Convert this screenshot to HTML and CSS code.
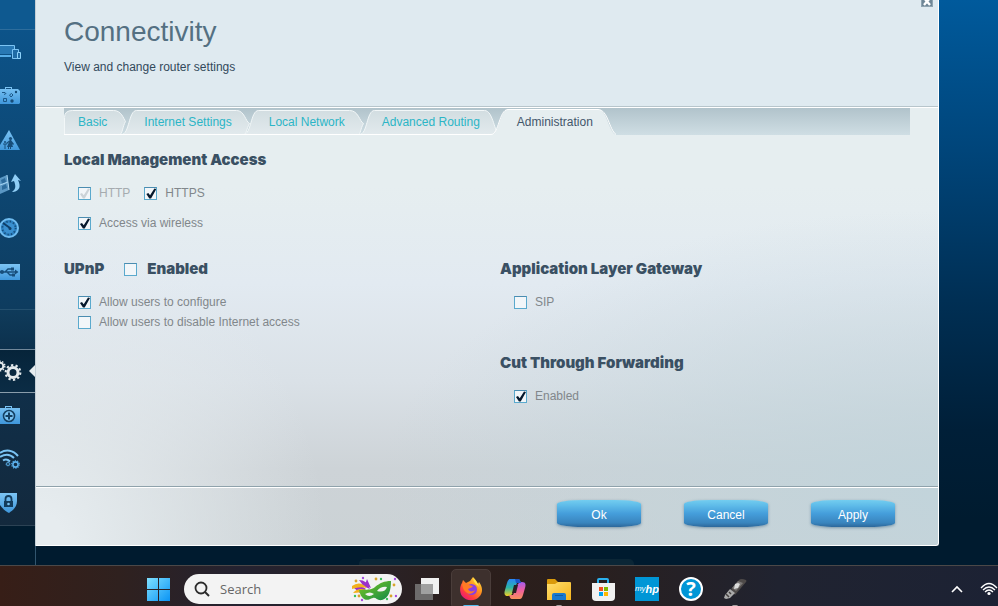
FILE: index.html
```html
<!DOCTYPE html>
<html lang="en">
<head>
<meta charset="utf-8">
<title>Connectivity</title>
<link rel="stylesheet" href="styles.css">
</head>
<body>
<svg width="0" height="0" class="defs" aria-hidden="true">
  <defs>
    <linearGradient id="ice" x1="0" y1="0" x2="0" y2="1"><stop offset="0" stop-color="#7cc4f4"/><stop offset="1" stop-color="#3f97db"/></linearGradient>
    <linearGradient id="tabfill" x1="0" y1="0" x2="0" y2="1"><stop offset="0" stop-color="#d2dde1"/><stop offset="1" stop-color="#e2eaed"/></linearGradient>
    <linearGradient id="win" x1="0" y1="0" x2="1" y2="1"><stop offset="0" stop-color="#7fe0ff"/><stop offset="1" stop-color="#0a94f5"/></linearGradient>
    <linearGradient id="fox" x1="1" y1="0" x2=".2" y2="1"><stop offset="0" stop-color="#fff44f"/><stop offset=".4" stop-color="#ff9a1f"/><stop offset=".75" stop-color="#ff3f3c"/><stop offset="1" stop-color="#e5147f"/></linearGradient>
    <linearGradient id="cop1" x1="0" y1="0" x2="0" y2="1"><stop offset="0" stop-color="#2a86f5"/><stop offset=".5" stop-color="#2bb5a8"/><stop offset="1" stop-color="#f0cf22"/></linearGradient>
    <linearGradient id="cop2" x1="0" y1="0" x2="0" y2="1"><stop offset="0" stop-color="#a45cf0"/><stop offset=".5" stop-color="#ef5f9d"/><stop offset="1" stop-color="#f9905a"/></linearGradient>
    <linearGradient id="fold" x1="0" y1="0" x2="1" y2="1"><stop offset="0" stop-color="#ffdf70"/><stop offset="1" stop-color="#f6b51a"/></linearGradient>
    <linearGradient id="leaf" x1="0" y1="0" x2="1" y2="1"><stop offset="0" stop-color="#7fc91f"/><stop offset="1" stop-color="#12894a"/></linearGradient>
    <g id="gear">
      <circle r="5" fill="none" stroke="currentColor" stroke-width="3"/>
      <circle r="7.3" fill="none" stroke="currentColor" stroke-width="2.2" stroke-dasharray="2.3 2.29"/>
    </g>
  </defs>
</svg>
<div class="page">
  <nav class="side" aria-label="Router menu">
    <div class="group first">
      <a href="#" aria-label="Device list"><svg width="22" height="20" viewBox="0 0 22 20"><path d="M0 3.500h14.500v4" fill="none" stroke="#7cc4f4"/><path d="M0 4h14v8H0z" fill="#2878b4"/><path d="M0 13h11v2H0z" fill="#58aee9"/><path d="M12.500 7.500h6v9h-6z" fill="#1f6ba5" stroke="#7cc4f4"/><path d="M17.500 10.500h3v6h-3z" fill="#1f6ba5" stroke="#8ed2fa"/></svg></a>
      <a href="#" aria-label="Guest access"><svg width="22" height="22" viewBox="0 0 22 22"><path d="M5 4V2h7v2h6l2 2v12l-1 1H0V4z" fill="url(#ice)"/><path d="M6 4V3h5v1z" fill="#145080"/><g fill="none" stroke="#1b5686"><path d="M2 7.500h3l1 1-2 1M3.500 13.500h3v3h-3zM9.500 10l2-1.500L13 10l-2 2z"/></g><circle cx="12" cy="16" r="1.700" fill="#164c78"/><circle cx="16" cy="7" r="1.200" fill="#164c78"/></svg></a>
      <a href="#" aria-label="Parental controls"><svg width="22" height="22" viewBox="0 0 22 22"><path d="M9 1l11 20H0V16z" fill="url(#ice)"/><g fill="#174e7b"><circle cx="10.500" cy="9.500" r="1.600"/><path d="M10 11h1l3 4-1 1-1-1 1 3h-2v2h-1v-2h-1v2H8v-2H7l2-5-2 2-1-1z"/><circle cx="5" cy="13" r="1"/><path d="M3 14.500h4v1H5.500V20h-1v-4.500H3z"/></g></svg></a>
      <a href="#" aria-label="Media prioritization"><svg width="22" height="22" viewBox="0 0 22 22"><path d="M0 5l7-3 2 15-9 4z" fill="#5a97c4"/><path d="M1 7l4-2 1 4-4 2zM2 13l4-2 1 4-5 2z" fill="#2d6c9d"/><path d="M7 2l2 15M0 12l8-3" stroke="#a7d5f3" fill="none"/><path d="M13 19c7-1 8-6 5-12l3 1-6-7-4 8 3-1c2 5 2 8-2 11z" fill="#90cef6"/></svg></a>
      <a href="#" aria-label="Speed test"><svg width="22" height="22" viewBox="0 0 22 22"><circle cx="9" cy="11" r="9" fill="#2b7fbf" stroke="#6fbcf0" stroke-width="2"/><circle cx="9" cy="11" r="6.500" fill="none" stroke="#154d7b" stroke-width="2" stroke-dasharray="1.200 2.200"/><circle cx="9" cy="11" r="5.500" fill="#3a90d0"/><path d="M3 6l7 5" stroke="#0f3f68" stroke-width="2"/><circle cx="10" cy="11.500" r="1.500" fill="#0f3f68"/></svg></a>
      <a href="#" aria-label="USB storage"><svg width="22" height="18" viewBox="0 0 22 18"><path d="M0 1h20v16H0z" fill="url(#ice)"/><path d="M0 9h17M5 9l3-3h4M7 9l3 3h3" fill="none" stroke="#174e7b" stroke-width="1.300"/><path d="M15 6.500L18.500 9 15 11.500zM11 4.500h3v3h-3zM12 10.500h3v3h-3z" fill="#174e7b"/><circle cx="2" cy="9" r="2" fill="#174e7b"/></svg></a>
    </div>
    <div class="spacer"></div>
    <a href="#" class="current" aria-label="Connectivity" aria-current="page"><svg width="24" height="26" viewBox="0 0 24 26" color="#e3e9ec"><use href="#gear" transform="translate(0 8) scale(.66)"/><use href="#gear" transform="translate(13 14.500)"/></svg></a>
    <div class="group last">
      <a href="#" aria-label="Troubleshooting"><svg width="22" height="22" viewBox="0 0 22 22"><path d="M5 4V2h7v2h8v16H0V4z" fill="url(#ice)"/><path d="M6 4V3h5v1z" fill="#123c5c"/><circle cx="9" cy="12" r="5.500" fill="#79c2f2" stroke="#143f61" stroke-width="1.600"/><path d="M8 8.500h2V11h2.500v2H10v2.500H8V13H5.500v-2H8z" fill="#143f61"/></svg></a>
      <a href="#" aria-label="Wireless"><svg width="22" height="22" viewBox="0 0 22 22" color="#5cb0ea"><g fill="none" stroke="#7cc4f4" stroke-width="2"><path d="M0 5c6-4 13-3 18 3M0 9c5-3 10-3 14 1M3 12.500c3-2 5-1 7 1"/></g><use href="#gear" transform="translate(15.500 16.500) scale(.52)"/><use href="#gear" transform="translate(8 16) scale(.3)"/></svg></a>
      <a href="#" aria-label="Security"><svg width="22" height="22" viewBox="0 0 22 22"><path d="M0 1h17v8c0 6-4 9-8 12-4-2-7-5-9-8z" fill="url(#ice)"/><path d="M5.500 10V7a3 3 0 0 1 6 0v3" fill="none" stroke="#133c5c" stroke-width="1.800"/><path d="M4 9h9v6H4z" fill="#133c5c"/><circle cx="8.500" cy="12" r="1.300" fill="#79c2f2"/></svg></a>
    </div>
  </nav>

  <main class="stage">
    <section class="dialog" aria-labelledby="title">
      <header>
        <h1 id="title">Connectivity</h1>
        <p>View and change router settings</p>
        <button class="close" type="button" aria-label="Close"><svg width="12" height="12" viewBox="0 0 12 12"><path d="M0 0h12v12H0z" fill="#8fa4b1"/><path d="M1 0h10v11H1z" fill="#6f8797"/><path d="M3 3l6 7M9 3l-6 7" stroke="#fff" stroke-width="2.400"/></svg></button>
      </header>
      <div class="content">
        <div class="tabs" role="tablist">
          <svg class="shapes" width="560" height="27" viewBox="0 0 560 27" aria-hidden="true">
            <g fill="url(#tabfill)" stroke="#f2f7f8">
              <path d="M295.500 26.500c8 0 7-24 15-24h110c9 0 10 24 15 24z"/>
              <path d="M179.500 26.500c8 0 7-24 15-24h91c9 0 10 11 14 13-3 5-3 11-5 11z"/>
              <path d="M57.500 26.500c8 0 7-24 15-24h100c8 0 9 11 13 13-3 5-3 11-6 11z"/>
              <path d="M.5 26.500v-17q0-7 8-7h41c8 0 10 8 12 11-3 5-3 13-6 13z"/>
            </g>
            <path d="M0 26.500h428c7 0 8-25 16-25h90c9 0 10 20 17 25v1H0z" fill="#e6eef0"/>
            <path d="M0 26.500h427c8 0 8-25 17-25h90c10 0 11 20 18 25" fill="none" stroke="#fff"/>
          </svg>
          <button type="button" role="tab">Basic</button>
          <button type="button" role="tab">Internet Settings</button>
          <button type="button" role="tab">Local Network</button>
          <button type="button" role="tab">Advanced Routing</button>
          <button type="button" role="tab" aria-selected="true">Administration</button>
        </div>
        <section class="block">
          <h2>Local Management Access</h2>
          <div class="row">
            <label><input type="checkbox" checked disabled>HTTP</label>
            <label><input type="checkbox" checked>HTTPS</label>
          </div>
          <div class="row spaced"><label><input type="checkbox" checked>Access via wireless</label></div>
        </section>
        <div class="columns">
          <section>
            <h2>UPnP <label class="big"><input type="checkbox">Enabled</label></h2>
            <div class="row"><label><input type="checkbox" checked>Allow users to configure</label></div>
            <div class="row"><label><input type="checkbox">Allow users to disable Internet access</label></div>
          </section>
          <div class="stack">
            <section>
              <h2>Application Layer Gateway</h2>
              <div class="row"><label><input type="checkbox">SIP</label></div>
            </section>
            <section>
              <h2>Cut Through Forwarding</h2>
              <div class="row"><label><input type="checkbox" checked>Enabled</label></div>
            </section>
          </div>
        </div>
      </div>
      <footer>
        <button type="button">Ok</button>
        <button type="button">Cancel</button>
        <button type="button">Apply</button>
      </footer>
    </section>
    <div class="strip"></div>
  </main>

  <div class="taskbar">
    <div class="apps">
      <button type="button" aria-label="Start"><svg width="24" height="24" viewBox="0 0 24 24"><path d="M1 1h11v11H1zM13 1h11v11H13zM1 13h11v11H1zM13 13h11v11H13z" fill="url(#win)"/></svg></button>
      <label class="search">
        <svg width="16" height="16" viewBox="0 0 16 16"><circle cx="7" cy="7" r="5.500" fill="none" stroke="#2b2b2b" stroke-width="1.800"/><path d="M11 11l4 4" stroke="#2b2b2b" stroke-width="2"/></svg>
        <input type="text" placeholder="Search" aria-label="Search">
        <svg width="46" height="26" viewBox="0 0 46 26"><g fill="#9b30c8"><path d="M8 4q8 0 11 9l-7-3q-2-4-4-6z"/><path d="M16 3l4 9-6-3zM3 12q8-3 12 1l-6 4z"/></g><path d="M1 10q8-6 15 2-7-2-15 1zM2 17q5-6 13-3-5 3-13 3z" fill="#f2b01e"/><path d="M8 14c8-1 11 1 16-3 5-4 9-6 16-6 0 9-2 17-9 19-5 1-6-3-9-2-4 1-5 3-9 1-3-2-4-5-5-9z" fill="url(#leaf)"/><path d="M14 18q5-3 9 0-5 4-9 0zM26 15q4-5 10-4-2 6-10 4z" fill="#f3f3f3"/><g fill="#a64ae0"><circle cx="12" cy="2" r="1.200"/><circle cx="44" cy="3" r="1.200"/><circle cx="45" cy="20" r="1.200"/><circle cx="11" cy="24" r="1.200"/></g><g fill="#d8a52a"><circle cx="5" cy="5" r="1.400"/><circle cx="43" cy="9" r="1.400"/><circle cx="40" cy="20" r="1.400"/><circle cx="25" cy="3" r="1.400"/><circle cx="8" cy="20" r="1.400"/></g><g fill="#36c15a"><circle cx="30" cy="3" r="1.200"/><circle cx="36" cy="23" r="1.200"/><circle cx="4" cy="20" r="1.200"/></g></svg>
      </label>
      <button type="button" aria-label="Task view"><svg width="24" height="24" viewBox="0 0 24 24"><path d="M6 1h18v16H6z" fill="#f0f0f0"/><path d="M0 7h18v16H0z" fill="#6d6b6b"/><path d="M6 7h12v10H6z" fill="#a0a0a0"/></svg></button>
      <button type="button" class="active" aria-label="Firefox"><svg width="24" height="24" viewBox="0 0 24 24"><path d="M3 6l1-3 3 3 4-2 3-4c3 3 4 5 5 7l1-2c4 5 4 11 0 15-5 5-13 4-17-1-3-5-2-10 0-13z" fill="url(#fox)"/><circle cx="12.500" cy="12.500" r="5.500" fill="#8a3fe0"/><path d="M3 7c2-2 5-1 7 1l4 1c-1 2-4 2-5 3 1 3 5 3 7 1-1 4-7 5-9 2-3-2-3-5-4-8z" fill="#ff7b25"/><path d="M14 1c4 3 5 6 6 9-2-3-5-3-6-9z" fill="#ffe64a"/></svg></button>
      <button type="button" aria-label="Copilot"><svg width="24" height="24" viewBox="0 0 24 24"><path d="M7 2h8c2 0 2 2 3 4h-4l-4 9c-1 3-3 4-5 4-4 0-4-3-3-6l2-7c1-3 2-4 3-4z" fill="url(#cop1)"/><path d="M17 22H9c-2 0-2-2-3-4h4l4-9c1-3 3-4 5-4 4 0 4 3 3 6l-2 7c-1 3-2 4-3 4z" fill="url(#cop2)"/><path d="M11 8h4l-2 8H9z" fill="#2b2024"/><path d="M12 2h3c2 0 2 2 3 4h-5z" fill="#1a56c9"/></svg></button>
      <button type="button" class="open" aria-label="File Explorer"><svg width="24" height="24" viewBox="0 0 24 24"><path d="M0 3q0-1 1-1h7l3 3h12v7H0z" fill="#d99a0b"/><path d="M0 7h8l3-2h12q1 0 1 1v17H0z" fill="url(#fold)"/><path d="M5 23v-5q0-2 2-2h10q2 0 2 2v5z" fill="#1779cf"/><path d="M8 18h8v1H8z" fill="#0d5ba6"/></svg></button>
      <button type="button" aria-label="Microsoft Store"><svg width="24" height="24" viewBox="0 0 24 24"><path d="M7 7V3q0-1 1-1h8q1 0 1 1v4" fill="none" stroke="#2bb1ee" stroke-width="2"/><path d="M1 6h23v14q0 4-4 4H5q-4 0-4-4z" fill="#f1f1f1"/><path d="M8 10h4v4H8z" fill="#f25022"/><path d="M13 10h4v4h-4z" fill="#7fba00"/><path d="M8 15h4v4H8z" fill="#00a4ef"/><path d="M13 15h4v4h-4z" fill="#ffb900"/></svg></button>
      <button type="button" class="myhp">my<b>hp</b></button>
      <button type="button" class="help"><span>?</span></button>
      <button type="button" class="open" aria-label="USB drive"><svg width="24" height="24" viewBox="0 0 24 24"><path d="M8 12l8-9q2-2 7 0 1 1 0 2L12 18z" fill="#4e4a49"/><path d="M9 11l6-7 5 2-7 8z" fill="#7b7877"/><path d="M12 7l3-1 2 1-2 4-4 1z" fill="#dcdcdc"/><path d="M2 18l5-6 5 4-5 5-4 1-2-1z" fill="#aaa"/><path d="M3 17l3 3M6 15l2 2" stroke="#454140" stroke-width="1.500"/></svg></button>
    </div>
    <div class="tray">
      <button type="button" aria-label="Show hidden icons"><svg width="12" height="8" viewBox="0 0 12 8"><path d="M1 7l5-5 5 5" fill="none" stroke="#fff" stroke-width="1.600"/></svg></button>
      <button type="button" aria-label="Network"><svg width="18" height="14" viewBox="0 0 18 14"><g fill="none" stroke="#fff" stroke-width="1.300"><path d="M1 6q8-9 16 0M3 8q6-6 12 0M5 10q4-4 8 0"/></g><circle cx="9" cy="11.500" r="1.600" fill="#fff"/></svg></button>
    </div>
  </div>
</div>
</body>
</html>
```
FILE: styles.css
```css
* { box-sizing: border-box; }

body {
  margin: 0;
  font: 12px/20px "Liberation Sans", Arial, sans-serif;
  color: #3a5060;
}

button {
  margin: 0;
  padding: 0;
  border: 0;
  background: none;
  font: inherit;
  cursor: pointer;
}

svg { display: block; flex: none; }
.defs { position: absolute; }
h1, h2, p { margin: 0; }

.page {
  display: grid;
  grid-template-columns: 36px minmax(0, 1fr);
  grid-template-rows: 1fr auto;
  min-height: 100vh;
  background: linear-gradient(#005a9c, #00457a 150px, #002f54 300px, #001f38 430px, #001b2f 520px);
}

/* Icon rail */
.side {
  border-right: 1px solid #31556e;
  background: #001c30;
  overflow: hidden;
}
.side a { display: flex; align-items: center; height: 44px; }
.group.first {
  padding-bottom: 15px;
  margin-top: 29px;
  border-top: 1px solid #2d6d9c;
  border-bottom: 1px solid #24506f;
  background: linear-gradient(#0c5389, #0e3c5f);
  box-shadow: 0 -30px 0 #0e5990;
}
.spacer { height: 39px; background: linear-gradient(#0f3b5b, #0c314d); }
.side .current {
  position: relative;
  border-top: 1px solid #71889a;
  border-bottom: 1px solid #8a9dab;
  background: linear-gradient(#06243a, #0b2c45);
}
.current::after {
  content: "";
  position: absolute;
  right: 0;
  top: 15px;
  border: 6px solid transparent;
  border-left: 0;
  border-right-color: #e6ecef;
}
.group.last {
  border-bottom: 1px solid #2c4254;
  background: linear-gradient(#102f49, #13293d);
}

/* Dialog */
.stage { display: flex; flex-direction: column; }
.dialog {
  flex: 1;
  display: flex;
  flex-direction: column;
  margin: 0 59px 0 -1px;
  border: solid #fff;
  border-width: 0 1px 1px;
  border-left-color: #c3ced5;
  border-radius: 0 0 3px 0;
  background:
    radial-gradient(ellipse 290px 330px at 0 100%, #e6ecef 10%, #e6ecef00),
    radial-gradient(ellipse 560px 280px at 100% 90%, #c2d4db, #c2d4db00),
    linear-gradient(#e6eef0 34%, #e2eaf1 52%, #dae1e7 70%, #cdd3d7 86%, #cbd2d5);
}
header {
  position: relative;
  height: 107px;
  padding: 16px 28px 0;
  border-bottom: 1px solid #b7c5cb;
  background: #dfeaf0;
}
h1 {
  font-size: 28px;
  line-height: 32px;
  font-weight: 400;
  color: #547082;
}
header p { margin-top: 9px; color: #33495b; }
.close { position: absolute; top: -5px; right: 5px; }

.content {
  flex: 1;
  padding: 0 28px;
  border-top: 1px solid #fff;
}
.tabs {
  position: relative;
  display: flex;
  height: 27px;
  background: linear-gradient(#b1c3cb, #cfdee4);
}
.tabs .shapes { position: absolute; inset: 0 auto auto 0; }
.tabs button {
  position: relative;
  padding: 0 19px 0 18px;
  color: #2bb5c6;
}
.tabs button:first-of-type { padding-left: 14px; }
.tabs [aria-selected="true"] { color: #43566a; }

h2 {
  display: flex;
  gap: 20px;
  margin-bottom: 13px;
  font: 900 15px/20px Inter, "Liberation Sans", sans-serif;
  color: #3a5063;
}
.block { margin: 15px 0 26px; }
.columns { display: grid; grid-template-columns: minmax(0, 436px) 1fr; }
.stack { display: grid; gap: 41px; }
.row { display: flex; gap: 14px; padding-left: 14px; color: #81878b; }
.spaced { margin-top: 10px; }
label { display: flex; align-items: center; gap: 8px; }
label.big { gap: 10px; }
label:has(:disabled) { color: #a5abaf; }

[type="checkbox"] {
  appearance: none;
  width: 13px;
  height: 13px;
  margin: 1px 0 0;
  border: 1px solid #5aa9cd;
  border-top-color: #4b8cb0;
  background: #f2f6f9;
}
[type="checkbox"]:checked::before {
  content: "";
  display: block;
  width: 11px;
  height: 11px;
  background: #06182c;
  clip-path: polygon(9% 55%, 27% 46%, 43% 66%, 82% 4%, 100% 9%, 52% 96%, 36% 96%);
}
[type="checkbox"]:disabled::before { background: #ccd3d8; }

footer {
  display: flex;
  justify-content: flex-end;
  gap: 43px;
  padding: 13px 43px 18px;
  border-top: 1px solid #8fa2ab;
  box-shadow: inset 0 1px #fff;
}
footer button {
  width: 84px;
  height: 27px;
  padding-top: 2px;
  border-radius: 26px / 4px;
  background: linear-gradient(#72cdf0, #5fbce9 20%, #459edb 50%, #3984bd 85%, #2c679a);
  box-shadow: 0 1px 3px #4a6f8a99;
  color: #fff;
}
.strip {
  width: 275px;
  height: 6px;
  margin: 13px 0 0 323px;
  border-radius: 5px 5px 0 0;
  background: #0b2636;
}

/* Taskbar */
.taskbar {
  grid-column: 1 / -1;
  display: flex;
  justify-content: space-between;
  height: 41px;
  border-top: 1px solid #4b4848;
  background: linear-gradient(90deg, #371e17, #2f211f 12%, #242230 24%, #2a2226 38%, #2b1e1b 48%, #2a1f1d 58%, #202330 78%, #1c2234);
  overflow: hidden;
}
.apps, .tray { display: flex; align-items: center; height: 46px; }
.apps { padding-left: 136px; }
.apps button {
  position: relative;
  display: grid;
  place-items: center;
  width: 44px;
  height: 40px;
}
.apps .active::before {
  content: "";
  position: absolute;
  inset: 0 2px;
  border: 1px solid #4a3d3a;
  border-radius: 5px;
  background: #3d302d;
}
.apps .active svg { position: relative; }
.apps .open::after, .apps .active::after {
  content: "";
  position: absolute;
  top: 36px;
  width: 6px;
  height: 3px;
  border-radius: 2px;
  background: #a5a0a0;
}
.apps .active::after { width: 16px; background: #55bdf0; }
.search {
  gap: 10px;
  width: 218px;
  height: 30px;
  margin: 0 3px 0 4px;
  padding: 0 5px 0 10px;
  border-radius: 15px;
  background: #f3f3f3;
}
.search input {
  flex: 1;
  min-width: 0;
  padding: 0;
  border: 0;
  background: none;
  font: 13px/20px "Open Sans", sans-serif;
  color: #333;
}
.search ::placeholder { color: #666; opacity: 1; }
.apps .myhp {
  display: flex;
  align-items: center;
  justify-content: center;
  width: 24px;
  height: 24px;
  margin: 0 10px;
  background: #0096d6;
  color: #fff;
  font: italic 8px/24px "Liberation Sans", sans-serif;
}
.myhp b { font-size: 11px; }
.help span {
  width: 24px;
  height: 24px;
  border: 2px solid #fff;
  border-radius: 50%;
  background: #0096d6;
  color: #fff;
  font: 700 20px/20px "Open Sans", sans-serif;
}
.tray { gap: 17px; }
```
